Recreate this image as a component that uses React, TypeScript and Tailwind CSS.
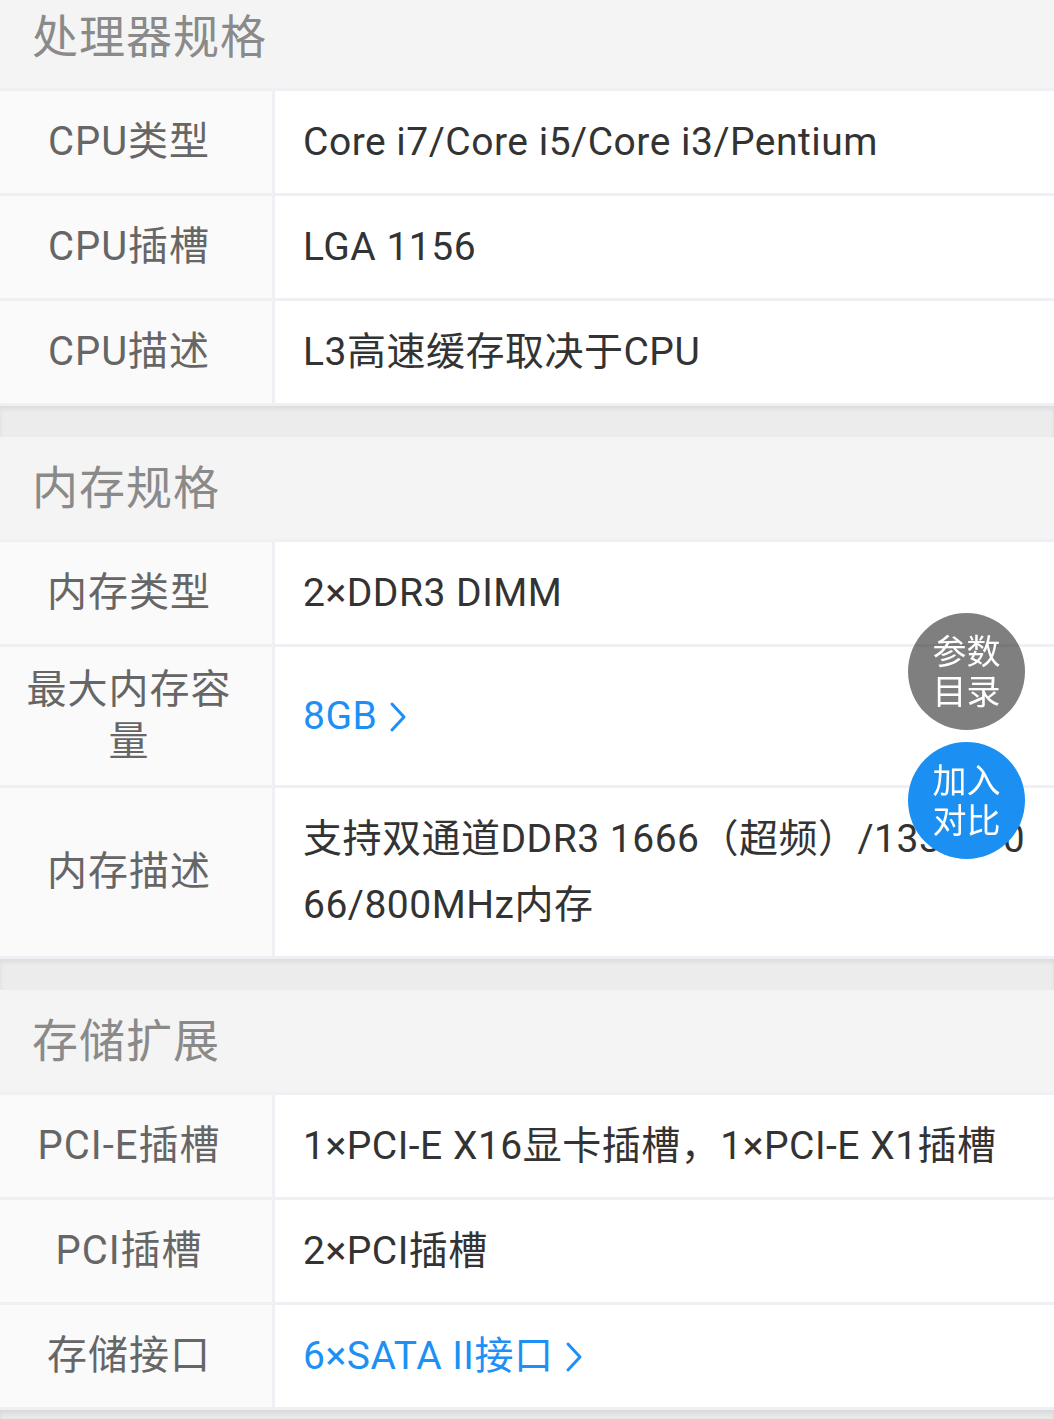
import * as React from 'react';

type Row = {
  label: string;
  value: React.ReactNode;
  link?: boolean;
};

type Section = {
  title: string;
  rows: Row[];
};

const sections: Section[] = [
  {
    title: '处理器规格',
    rows: [
      { label: 'CPU类型', value: 'Core i7/Core i5/Core i3/Pentium' },
      { label: 'CPU插槽', value: 'LGA 1156' },
      { label: 'CPU描述', value: 'L3高速缓存取决于CPU' },
    ],
  },
  {
    title: '内存规格',
    rows: [
      { label: '内存类型', value: '2×DDR3 DIMM' },
      { label: '最大内存容量', value: '8GB', link: true },
      {
        label: '内存描述',
        value: (
          <>
            支持双通道DDR3 1666（超频）/1333/10
            <br />
            66/800MHz内存
          </>
        ),
      },
    ],
  },
  {
    title: '存储扩展',
    rows: [
      { label: 'PCI-E插槽', value: '1×PCI-E X16显卡插槽，1×PCI-E X1插槽' },
      { label: 'PCI插槽', value: '2×PCI插槽' },
      { label: '存储接口', value: '6×SATA II接口', link: true },
    ],
  },
];

function Chevron() {
  return (
    <svg width="18" height="32" viewBox="0 0 18 32" className="ml-[12px] inline-block align-[-4px]">
      <polyline
        points="3,3 15,16 3,29"
        fill="none"
        stroke="currentColor"
        strokeWidth="3"
        strokeLinecap="round"
        strokeLinejoin="round"
      />
    </svg>
  );
}

function SpecSection({ section }: { section: Section }) {
  return (
    <div className="flex flex-col gap-[3px] bg-[#eff0f3] pb-[3px]">
      <div className="flex h-[102px] items-center bg-[#f4f4f4] pl-[32px] text-[46px] tracking-[1px] text-[#8a8a8a]">
        {section.title}
      </div>
      {section.rows.map((row) => (
        <div key={row.label} className="flex min-h-[102px] gap-[3px]">
          <div className="flex w-[272px] shrink-0 items-center justify-center bg-[#fafafa] py-[17px] pl-[16px] pr-[30px] text-center text-[40px] leading-[52px] tracking-[1px] text-[#666]">
            {row.label}
          </div>
          <div
            className={
              row.link
                ? 'flex min-w-0 flex-1 items-center bg-white py-[18px] pl-[28px] pr-[20px] text-[39px] leading-[66px] tracking-[0.5px] text-[#1e90f5]'
                : 'flex min-w-0 flex-1 items-center bg-white py-[18px] pl-[28px] pr-[20px] text-[39px] leading-[66px] tracking-[0.5px] text-[#333]'
            }
          >
            <span className="whitespace-nowrap">
              {row.value}
              {row.link && <Chevron />}
            </span>
          </div>
        </div>
      ))}
    </div>
  );
}

export default function App() {
  return (
    <div
      className="relative min-h-[1419px] overflow-hidden bg-[#ececec]"
      style={{ fontFamily: 'Roboto, "Noto Sans CJK SC", sans-serif' }}
    >
      <div className="-mt-[14px] flex flex-col">
        {sections.map((s, i) => (
          <React.Fragment key={s.title}>
            {i > 0 && (
              <div className="h-[31px] bg-[#ececec] shadow-[inset_0_3px_4px_rgba(0,0,0,0.07)]" />
            )}
            <SpecSection section={s} />
          </React.Fragment>
        ))}
        <div className="h-[32px] bg-[#e8e8e8] shadow-[inset_0_3px_4px_rgba(0,0,0,0.07)]" />
      </div>

      <div className="fixed right-[29px] top-[613px] flex flex-col gap-[12px]">
        <button className="flex h-[117px] w-[117px] flex-col items-center justify-center rounded-full bg-black/50 text-[34px] leading-[40px] text-white">
          <span>参数</span>
          <span>目录</span>
        </button>
        <button className="flex h-[117px] w-[117px] flex-col items-center justify-center rounded-full bg-[#1b8ff2] text-[34px] leading-[40px] text-white">
          <span>加入</span>
          <span>对比</span>
        </button>
      </div>
    </div>
  );
}
